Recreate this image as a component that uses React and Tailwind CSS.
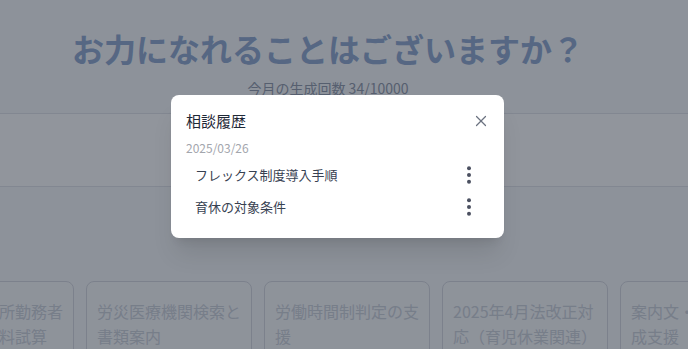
import { X } from 'lucide-react';

const suggestions = [
  '海外の事業所勤務者の社会保険料試算',
  '労災医療機関検索と書類案内',
  '労働時間制判定の支援',
  '2025年4月法改正対応（育児休業関連）',
  '案内文・社内通知作成支援',
];

const history = [
  { date: '2025/03/26', items: ['フレックス制度導入手順', '育休の対象条件'] },
];

const KebabIcon = () => (
  <svg width="8" height="20" viewBox="0 0 8 20" fill="currentColor">
    <circle cx="4" cy="3.3" r="2" />
    <circle cx="4" cy="10" r="2" />
    <circle cx="4" cy="16.7" r="2" />
  </svg>
);

const HistoryModal = () => {
  return (
    <div className="absolute left-[171px] top-[95px] w-[333px] bg-white rounded-lg shadow-xl px-[15px] pt-[15px] pb-[15px]">
      <div className="flex items-center justify-between">
        <h2 className="text-[15px] leading-[22px] text-[#1f2937]">相談履歴</h2>
        <button className="text-[#6b7280] -mr-[1px]">
          <X size={18} strokeWidth={1.6} />
        </button>
      </div>

      {history.map((group) => (
        <div key={group.date} className="mt-[7px]">
          <p className="text-[12px] leading-[18px] text-[#a3a6ad]">{group.date}</p>
          <ul className="mt-[2px]">
            {group.items.map((item) => (
              <li
                key={item}
                className="flex items-center justify-between h-[32px] pl-[9px] pr-[16px] rounded-md"
              >
                <span className="text-[13px] text-[#374151]">{item}</span>
                <span className="text-[#4b5060]">
                  <KebabIcon />
                </span>
              </li>
            ))}
          </ul>
        </div>
      ))}
    </div>
  );
};

export default function App() {
  return (
    <div
      className="relative w-[688px] h-[349px] overflow-hidden bg-[#f8f9fb]"
      style={{ fontFamily: '"Noto Sans CJK JP", "Noto Sans", sans-serif' }}
    >
      {/* ページ本体 */}
      <div className="w-[656px] pt-[28px] flex flex-col items-center">
        <h1 className="text-[32px] leading-[40px] font-bold text-[#92aad1]">
          お力になれることはございますか？
        </h1>
        <p className="mt-[10px] text-[14px] leading-[20px] text-[#939cad]">
          今月の生成回数 34/10000
        </p>
      </div>

      <div className="mt-[15px] h-[74px] bg-white border-y border-[#e3e6eb]" />

      <div className="mt-[94px] flex gap-3 -ml-[92px]">
        {suggestions.map((text) => (
          <div
            key={text}
            className="shrink-0 w-[166px] h-[100px] rounded-lg border border-[#d8dbe2] bg-[#fafbfc] px-[10px] pt-[17px]"
          >
            <p className="text-[16px] leading-[25px] text-[#cfd4dd]">{text}</p>
          </div>
        ))}
      </div>

      {/* オーバーレイ */}
      <div className="absolute inset-0 bg-[#101828]/[0.46]" />

      <HistoryModal />
    </div>
  );
}
